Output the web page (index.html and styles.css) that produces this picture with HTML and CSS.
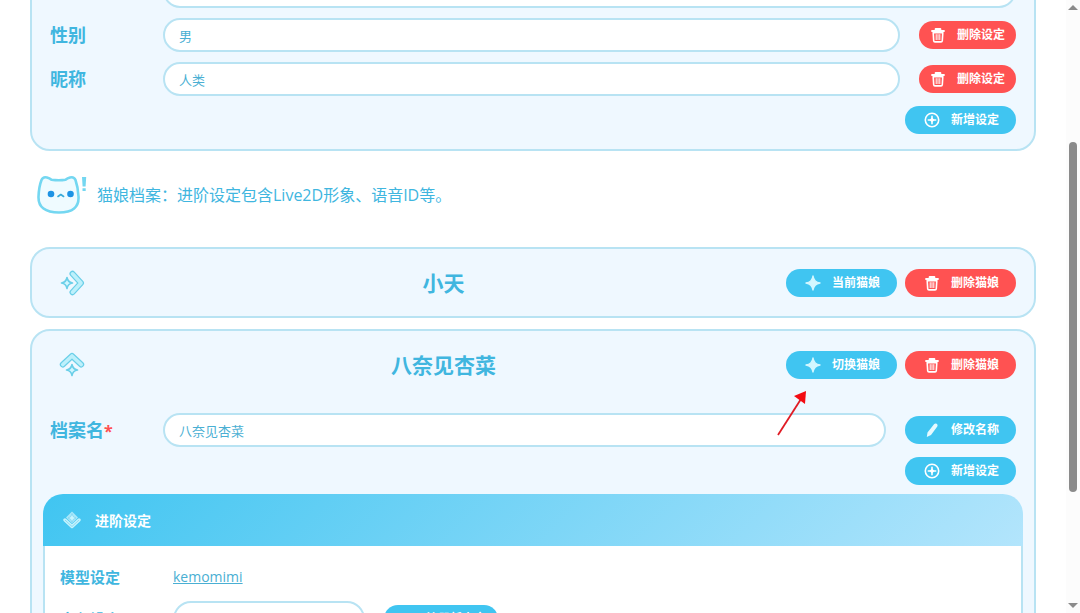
FILE: index.html
```
<!DOCTYPE html>
<html lang="zh-CN">
<head>
    <meta charset="UTF-8">
    <meta name="viewport" content="width=device-width, initial-scale=1.0">
    <title>猫娘档案</title>
    <link rel="stylesheet" href="styles.css">
</head>
<body>
    <!-- 图标 -->
    <svg class="icon-defs" aria-hidden="true">
        <symbol id="icon-trash" viewBox="0 0 16 16">
            <path d="M2 4h12M5.600 3V1.900h4.800V3z" fill="#fff" stroke="#fff" stroke-width="1.800" stroke-linecap="round" stroke-linejoin="round"/>
            <path d="M3.200 5.600l.5 8.100q.1 1.200 1.300 1.200h6q1.200 0 1.300-1.200l.5-8.100z" fill="none" stroke="#fff" stroke-width="1.600" stroke-linejoin="round"/>
            <path d="M6.200 7.200v5.800M8 7.200v5.800M9.800 7.200v5.800" stroke="#fff" stroke-width="1"/>
        </symbol>
        <symbol id="icon-plus" viewBox="0 0 16 16">
            <circle cx="8" cy="8" r="6.700" fill="none" stroke="#fff" stroke-width="1.600"/>
            <path d="M8 4.300v7.400M4.300 8h7.400" stroke="#fff" stroke-width="1.600" stroke-linecap="round"/>
            <path d="M8 5.500 10.500 8 8 10.500 5.500 8z" fill="#fff"/>
        </symbol>
        <symbol id="icon-star" viewBox="0 0 16 16">
            <path d="M8 1Q8.900 7.100 15 8 8.900 8.900 8 15 7.100 8.900 1 8 7.100 7.100 8 1z" fill="#d3f7ff" stroke="#d3f7ff" stroke-width="1.400" stroke-linejoin="round"/>
        </symbol>
        <symbol id="icon-pen" viewBox="0 0 16 16">
            <path d="M10 2.300q1.200-1.500 2.700-.5 1.600 1.200.6 2.700L7 12.900l-4.200 2 .7-4.500z" fill="#e6faff"/>
        </symbol>
        <symbol id="icon-arrow" viewBox="0 0 26 26">
            <g fill="none" stroke-linecap="round" stroke-linejoin="round">
                <path d="M13.500 3.800 22 13l-8.500 9.200" stroke="#6bcfe8" stroke-width="6"/>
                <path d="M13.500 3.800 22 13l-8.500 9.200" stroke="#bdf0fb" stroke-width="3.600"/>
                <path d="M8 7.500q.8 4.700 5.500 5.500-4.700.8-5.500 5.500Q7.200 13.800 2.500 13q4.700-.8 5.500-5.500z" fill="#d0f6ff" stroke="#6bcfe8" stroke-width="1.600"/>
            </g>
        </symbol>
        <symbol id="icon-layers" viewBox="0 0 18 18">
            <path d="M9 .5 15 6.500 9 12.500 3 6.500z" fill="#a9e8fa"/>
            <path d="M2 9l7 6.500L16 9" fill="none" stroke="#c4f3fd" stroke-width="3.400" stroke-linecap="round" stroke-linejoin="round"/>
            <path d="M2 9l7 6.500L16 9" fill="none" stroke="#7fd3ef" stroke-width=".8"/>
            <path d="M9 2.500Q9.500 6.500 13 7 9.500 7.500 9 11.500 8.500 7.500 5 7 8.500 6.500 9 2.500z" fill="#c9f5ff" stroke="#74cfee" stroke-width=".6"/>
        </symbol>
    </svg>

    <div class="page">
        <main class="content">
            <section class="panel panel-master">
                <div class="field-row">
                    <span class="field-label"></span>
                    <input class="field-input" type="text" aria-label="档案名">
                </div>
                <div class="field-row">
                    <label class="field-label" for="gender">性别</label>
                    <input class="field-input" type="text" id="gender" value="男">
                    <button class="btn btn-danger btn-small" type="button"><svg><use href="#icon-trash"/></svg>删除设定</button>
                </div>
                <div class="field-row">
                    <label class="field-label" for="nickname">昵称</label>
                    <input class="field-input" type="text" id="nickname" value="人类">
                    <button class="btn btn-danger btn-small" type="button"><svg><use href="#icon-trash"/></svg>删除设定</button>
                </div>
                <div class="action-row">
                    <button class="btn" type="button"><svg><use href="#icon-plus"/></svg>新增设定</button>
                </div>
            </section>

            <div class="section-tip">
                <svg class="cat" viewBox="0 0 50 40" aria-hidden="true">
                    <path d="M4.500 5Q6 1.500 10 2.500q2.500.6 4.500 2.300 7.500 1 14 0 2-1.700 4.500-2.300 4-1 5.500 2.500 2.500 7 3 16.500Q42.500 37.300 22 37.500 1.200 37.300 1.500 22 1.800 12 4.500 5z" fill="#effbff" stroke="#74d7f1" stroke-width="2.600" stroke-linejoin="round"/>
                    <circle cx="14" cy="19" r="3.300" fill="#1e93e4"/>
                    <circle cx="33.500" cy="19" r="3.300" fill="#1e93e4"/>
                    <path d="M21 21.500l2.800-2 2.800 2" fill="none" stroke="#39abd9" stroke-width="1.600" stroke-linecap="round" stroke-linejoin="round"/>
                    <path d="M45 2h4.200l-.6 9.500h-3zM45.500 13.200h3.200V16h-3.200z" fill="#74d7f1"/>
                </svg>
                <p>猫娘档案：进阶设定包含Live2D形象、语音ID等。</p>
            </div>

            <section class="panel">
                <div class="panel-header">
                    <button class="toggle" type="button" aria-label="展开"><svg><use href="#icon-arrow"/></svg></button>
                    <h2>小天</h2>
                    <div class="panel-actions">
                        <button class="btn" type="button"><svg><use href="#icon-star"/></svg>当前猫娘</button>
                        <button class="btn btn-danger" type="button"><svg><use href="#icon-trash"/></svg>删除猫娘</button>
                    </div>
                </div>
            </section>

            <section class="panel">
                <div class="panel-header">
                    <button class="toggle open" type="button" aria-label="收起"><svg><use href="#icon-arrow"/></svg></button>
                    <h2>八奈见杏菜</h2>
                    <div class="panel-actions">
                        <button class="btn" type="button"><svg><use href="#icon-star"/></svg>切换猫娘</button>
                        <button class="btn btn-danger" type="button"><svg><use href="#icon-trash"/></svg>删除猫娘</button>
                        <svg class="pointer" viewBox="0 0 32 46" aria-hidden="true">
                            <path d="M2 45 25 9" stroke="#e01b24" stroke-width="1.800"/>
                            <path d="M30 1 18 6l11 8z" fill="#f30b12"/>
                        </svg>
                    </div>
                </div>
                <div class="panel-fields">
                    <div class="field-row">
                        <label class="field-label" for="profile-name">档案名<span class="required">*</span></label>
                        <input class="field-input" type="text" id="profile-name" value="八奈见杏菜">
                        <button class="btn" type="button"><svg><use href="#icon-pen"/></svg>修改名称</button>
                    </div>
                    <div class="action-row">
                        <button class="btn" type="button"><svg><use href="#icon-plus"/></svg>新增设定</button>
                    </div>
                </div>

                <div class="advanced">
                    <h3 class="advanced-header"><svg><use href="#icon-layers"/></svg>进阶设定</h3>
                    <div class="advanced-body">
                        <div class="advanced-row">
                            <span class="advanced-label">模型设定</span>
                            <a href="#">kemomimi</a>
                        </div>
                        <div class="advanced-row">
                            <label class="advanced-label" for="voice">音色设定</label>
                            <select id="voice">
                                <option>请选择音色</option>
                            </select>
                            <button class="btn btn-voice" type="button">注册新声音</button>
                        </div>
                    </div>
                </div>
            </section>
        </main>

        <!-- 滚动条 -->
        <div class="scrollbar" aria-hidden="true">
            <span class="scroll-up"></span>
            <div class="scroll-track">
                <span class="scroll-thumb"></span>
            </div>
            <span class="scroll-down"></span>
        </div>
    </div>
</body>
</html>
```

FILE: styles.css
```
* {
    margin: 0;
    padding: 0;
    box-sizing: border-box;
}

body {
    font-family: "Open Sans", "Noto Sans CJK SC", sans-serif;
    color: #40b6df;
    background: #fff;
}

button,
input,
select {
    font-family: inherit;
}

.icon-defs {
    display: none;
}

.page {
    display: flex;
    height: 100vh;
    overflow: hidden;
}

.content {
    flex: 1;
    min-width: 0;
    padding: 0 30px;
}

/* 面板 */
.panel {
    margin-bottom: 11px;
    padding: 20px 11px 19px;
    border: 2px solid #b8e3f3;
    border-radius: 20px;
    background: #eff8ff;
}

/* 已向上滚动的主人档案 */
.panel-master {
    margin-top: -28px;
    margin-bottom: 24px;
    padding: 0 11px 15px;
}

.panel-header {
    display: flex;
    align-items: center;
    padding: 0 7px;
    height: 28px;
}

.panel-header h2 {
    flex: 1;
    text-align: center;
    font-size: 21px;
    line-height: 28px;
}

.panel-actions {
    position: relative;
    display: flex;
    gap: 8px;
}

.toggle {
    width: 51px;
    height: 28px;
    padding-left: 9px;
    border: none;
    background: none;
    text-align: left;
    cursor: pointer;
}

.toggle svg {
    display: block;
    width: 26px;
    height: 26px;
}

.toggle.open svg {
    transform: rotate(-90deg);
}

.pointer {
    position: absolute;
    top: 39px;
    left: -10px;
    width: 32px;
    height: 46px;
    pointer-events: none;
}

/* 表单行 */
.panel-fields {
    padding-top: 34px;
}

.field-row {
    display: flex;
    align-items: center;
    margin-bottom: 10px;
    padding: 0 7px;
}

.field-label {
    width: 113px;
    font-size: 18px;
    line-height: 28px;
    font-weight: bold;
}

.required {
    color: #ff5050;
    font-size: 16px;
}

.field-input {
    flex: 1;
    min-width: 0;
    height: 34px;
    padding: 0 14px;
    border: 2px solid #b8e3f3;
    border-radius: 17px;
    background: #fff;
    color: #4aafd3;
    font-size: 13px;
    outline: none;
}

.field-row .btn {
    margin-left: 19px;
}

.action-row {
    display: flex;
    justify-content: flex-end;
    padding: 0 7px;
}

/* 按钮 */
.btn {
    display: flex;
    align-items: center;
    gap: 11px;
    height: 28px;
    padding: 0 17px 0 19px;
    border: none;
    border-radius: 14px;
    background: #40c5f1;
    color: #fff;
    font-size: 12px;
    line-height: 16px;
    font-weight: bold;
    white-space: nowrap;
    cursor: pointer;
}

.btn svg {
    width: 16px;
    height: 16px;
}

.btn-danger {
    background: #ff5252;
}

.btn-small {
    padding: 0 11px;
}

/* 提示 */
.section-tip {
    display: flex;
    align-items: center;
    gap: 10px;
    margin-bottom: 32px;
    padding-left: 7px;
}

.section-tip p {
    font-size: 16px;
    line-height: 24px;
}

.cat {
    width: 50px;
    height: 40px;
}

/* 进阶设定 */
.advanced {
    margin-top: 9px;
    border-radius: 20px 20px 0 0;
    background: #fff;
    overflow: hidden;
}

.advanced-header {
    display: flex;
    align-items: center;
    gap: 14px;
    height: 52px;
    padding: 0 20px;
    background: linear-gradient(135deg, #40c5f1, #b3e5fc);
    color: #fff;
    font-size: 14px;
}

.advanced-header svg {
    width: 18px;
    height: 18px;
}

.advanced-body {
    padding: 20px 15px;
    border: 2px solid #b8e3f3;
    border-top: none;
}

.advanced-row {
    display: flex;
    align-items: center;
    margin-bottom: 13px;
}

.advanced-label {
    width: 113px;
    font-size: 15px;
    line-height: 22px;
    font-weight: bold;
}

.advanced-row a {
    color: #4aafd3;
    font-size: 14px;
    line-height: 22px;
}

.advanced-row select {
    appearance: none;
    width: 192px;
    height: 36px;
    padding: 0 18px;
    border: 2px solid #b8e3f3;
    border-radius: 18px;
    background: #fff;
    color: #4aafd3;
    font-size: 13px;
}

.btn-voice {
    margin-left: 19px;
    padding: 0 12px 0 42px;
}

/* 滚动条 */
.scrollbar {
    display: flex;
    flex-direction: column;
    align-items: center;
    width: 14px;
    padding: 5px 0;
    background: #fcfcfc;
}

.scroll-up,
.scroll-down {
    border: 5px solid transparent;
}

.scroll-up {
    border-top: none;
    border-bottom: 5px solid #8b8b8b;
}

.scroll-down {
    border-bottom: none;
    border-top: 5px solid #8b8b8b;
}

.scroll-track {
    flex: 1;
    padding-top: 132px;
}

.scroll-thumb {
    display: block;
    width: 8px;
    height: 76%;
    border-radius: 4px;
    background: #8b8b8b;
}
```
